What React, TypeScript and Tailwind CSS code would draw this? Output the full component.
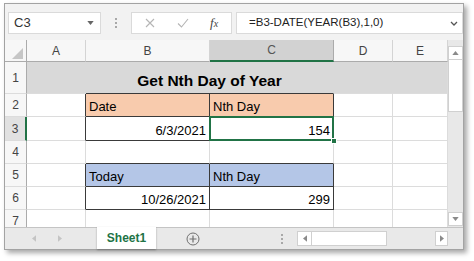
import type { ReactNode } from 'react';

// Excel window: name box, formula bar, grid A–E, sheet tabs.
const FONT = { fontFamily: '"Liberation Sans", Arial, sans-serif' };

function Hdr({ children, className = '' }: { children?: ReactNode; className?: string }) {
  return (
    <div className={`flex items-center justify-center border-r border-b text-[12px] text-[#444] ${className}`}>
      {children}
    </div>
  );
}

function Cell({ children, className = '' }: { children?: ReactNode; className?: string }) {
  return <div className={`flex items-end border-r border-b px-[3px] pb-[2px] text-[13px] leading-[15px] text-black ${className}`}>{children}</div>;
}

function Arrow({ dir, className = '' }: { dir: 'up' | 'down' | 'left' | 'right'; className?: string }) {
  const pts = { up: '0,5 4,0 8,5', down: '0,0 8,0 4,5', left: '5,0 5,8 0,4', right: '0,0 0,8 5,4' }[dir];
  const vb = dir === 'up' || dir === 'down' ? '0 0 8 5' : '0 0 5 8';
  const size = dir === 'up' || dir === 'down' ? 'h-[4px] w-[7px]' : 'h-[7px] w-[4px]';
  return (
    <svg viewBox={vb} className={`${size} ${className}`}>
      <polygon points={pts} fill="currentColor" />
    </svg>
  );
}

function Dots() {
  return (
    <div className="flex flex-col gap-[2px]">
      <span className="h-[2px] w-[2px] bg-[#a8a8a8]" />
      <span className="h-[2px] w-[2px] bg-[#a8a8a8]" />
      <span className="h-[2px] w-[2px] bg-[#a8a8a8]" />
    </div>
  );
}

export default function App() {
  const hdrRow = 'bg-[#f7f7f7] border-r-[#ababab] border-b-[#dcdcdc]';
  const hdrCol = 'bg-[#f7f7f7] border-r-[#d4d4d4] border-b-[#ababab]';
  return (
    <div className="h-[261px] w-[474px] overflow-hidden bg-white pl-[4px] pt-[3px]" style={FONT}>
      <div className="flex h-[247px] w-[460px] flex-col border border-[#a3a3a3] bg-[#f2f2f2] shadow-[3px_3px_5px_rgba(0,0,0,0.35)]">
        {/* formula bar */}
        <div className="flex h-[36px] items-start pl-[3px] pt-[8px]">
          <div className="flex h-[22px] w-[93px] items-center justify-between border border-[#dadada] bg-white pl-[5px] pr-[6px] text-[13px] text-[#333]">
            <span>C3</span>
            <Arrow dir="down" className="text-[#666]" />
          </div>
          <div className="flex h-[22px] w-[30px] items-center justify-center">
            <Dots />
          </div>
          <div className="flex h-[22px] w-[101px] items-center border border-[#dadada] bg-white text-[#b5b5b5]">
            <svg viewBox="0 0 10 10" className="ml-[13px] h-[10px] w-[10px]">
              <path d="M1 1 9 9M9 1 1 9" stroke="currentColor" strokeWidth="1.1" fill="none" />
            </svg>
            <svg viewBox="0 0 12 10" className="ml-[22px] h-[10px] w-[12px]">
              <path d="M1 5.5 4.5 9 11 1" stroke="currentColor" strokeWidth="1.1" fill="none" />
            </svg>
            <span className="ml-[21px] text-[13px] italic text-[#444]" style={{ fontFamily: '"Liberation Serif", serif' }}>
              f<span className="text-[10px]">x</span>
            </span>
          </div>
          <div className="ml-[4px] flex h-[22px] flex-1 items-center justify-between border border-[#dadada] bg-white pl-[12px] pr-[4px] text-[11.5px] text-[#222]">
            <span>=B3-DATE(YEAR(B3),1,0)</span>
            <svg viewBox="0 0 8 5" className="h-[5px] w-[8px] text-[#555]">
              <path d="M1 1 4 4 7 1" stroke="currentColor" strokeWidth="1.3" fill="none" />
            </svg>
          </div>
        </div>

        {/* grid + vertical scrollbar */}
        <div className="flex h-[187px] overflow-hidden">
          <div className="grid grid-cols-[22px_59px_124px_124px_59px_55px] grid-rows-[22px_32px_23px_24px_23px_23px_23px_17px] bg-white">
            {/* column headers */}
            <div className="flex items-end justify-end border-r border-b border-r-[#ababab] border-b-[#ababab] bg-[#f7f7f7] pb-[2px] pr-[3px]">
              <svg viewBox="0 0 10 10" className="h-[11px] w-[11px]">
                <polygon points="10,0 10,10 0,10" fill="#c6c6c6" />
              </svg>
            </div>
            <Hdr className={hdrCol}>A</Hdr>
            <Hdr className={hdrCol}>B</Hdr>
            <Hdr className="border-b-2 border-r-[#ababab] border-b-[#217346] bg-[#d2d2d2] text-[#555]">C</Hdr>
            <Hdr className={hdrCol}>D</Hdr>
            <Hdr className={hdrCol}>E</Hdr>

            {/* row 1 */}
            <Hdr className={hdrRow}>1</Hdr>
            <Cell className="border-r-[#d9d9d9] border-b-[#dcdcdc] bg-[#d9d9d9]" />
            <Cell className="col-span-2 justify-center border-r-[#d9d9d9] border-b-[#3a3a3a] bg-[#d9d9d9] pb-[3px] text-[15.5px] font-bold leading-[18px]">
              Get Nth Day of Year
            </Cell>
            <Cell className="border-r-[#d9d9d9] border-b-[#dcdcdc] bg-[#d9d9d9]" />
            <Cell className="border-r-[#dcdcdc] border-b-[#dcdcdc] bg-[#d9d9d9]" />

            {/* row 2 */}
            <Hdr className={hdrRow}>2</Hdr>
            <Cell className="border-r-[#3a3a3a] border-b-[#dcdcdc]" />
            <Cell className="border-r-[#3a3a3a] border-b-[#3a3a3a] bg-[#f8cbad]">Date</Cell>
            <Cell className="border-r-[#3a3a3a] border-b-[#3a3a3a] bg-[#f8cbad]">Nth Day</Cell>
            <Cell className="border-r-[#dcdcdc] border-b-[#dcdcdc]" />
            <Cell className="border-r-[#dcdcdc] border-b-[#dcdcdc]" />

            {/* row 3 */}
            <Hdr className="border-r-2 border-r-[#217346] border-b-[#dcdcdc] bg-[#e1e1e1] text-[#5b8f6e]">3</Hdr>
            <Cell className="border-r-[#3a3a3a] border-b-[#dcdcdc]" />
            <Cell className="justify-end border-r-[#3a3a3a] border-b-[#3a3a3a]">6/3/2021</Cell>
            <Cell className="relative justify-end border-r-[#3a3a3a] border-b-[#3a3a3a]">
              154
              <span className="pointer-events-none absolute -inset-[1px] border-2 border-[#217346]" />
              <span className="absolute -bottom-[4px] -right-[4px] h-[6px] w-[6px] border border-white bg-[#217346]" />
            </Cell>
            <Cell className="border-r-[#dcdcdc] border-b-[#dcdcdc]" />
            <Cell className="border-r-[#dcdcdc] border-b-[#dcdcdc]" />

            {/* row 4 */}
            <Hdr className={hdrRow}>4</Hdr>
            <Cell className="border-r-[#dcdcdc] border-b-[#dcdcdc]" />
            <Cell className="border-r-[#dcdcdc] border-b-[#3a3a3a]" />
            <Cell className="border-r-[#dcdcdc] border-b-[#3a3a3a]" />
            <Cell className="border-r-[#dcdcdc] border-b-[#dcdcdc]" />
            <Cell className="border-r-[#dcdcdc] border-b-[#dcdcdc]" />

            {/* row 5 */}
            <Hdr className={hdrRow}>5</Hdr>
            <Cell className="border-r-[#3a3a3a] border-b-[#dcdcdc]" />
            <Cell className="border-r-[#3a3a3a] border-b-[#3a3a3a] bg-[#b4c6e7]">Today</Cell>
            <Cell className="border-r-[#3a3a3a] border-b-[#3a3a3a] bg-[#b4c6e7]">Nth Day</Cell>
            <Cell className="border-r-[#dcdcdc] border-b-[#dcdcdc]" />
            <Cell className="border-r-[#dcdcdc] border-b-[#dcdcdc]" />

            {/* row 6 */}
            <Hdr className={hdrRow}>6</Hdr>
            <Cell className="border-r-[#3a3a3a] border-b-[#dcdcdc]" />
            <Cell className="justify-end border-r-[#3a3a3a] border-b-[#3a3a3a]">10/26/2021</Cell>
            <Cell className="justify-end border-r-[#3a3a3a] border-b-[#3a3a3a]">299</Cell>
            <Cell className="border-r-[#dcdcdc] border-b-[#dcdcdc]" />
            <Cell className="border-r-[#dcdcdc] border-b-[#dcdcdc]" />

            {/* row 7 (cut off) */}
            <div className="flex items-start justify-center border-r border-r-[#ababab] bg-[#f7f7f7] pt-[2px] text-[12px] text-[#444]">7</div>
            <div className="border-r border-r-[#dcdcdc]" />
            <div className="border-r border-r-[#dcdcdc]" />
            <div className="border-r border-r-[#dcdcdc]" />
            <div className="border-r border-r-[#dcdcdc]" />
            <div className="border-r border-r-[#dcdcdc]" />
          </div>

          <div className="flex w-[15px] flex-col bg-[#e8e8e8] pt-[6px]">
            <div className="flex h-[14px] items-center justify-center border border-[#d0d0d0] bg-white text-[#8a8a8a]">
              <Arrow dir="up" />
            </div>
            <div className="h-[52px] border-x border-b border-[#d0d0d0] bg-white" />
            <div className="flex-1" />
            <div className="mb-[1px] flex h-[14px] items-center justify-center border border-[#d0d0d0] bg-white text-[#8a8a8a]">
              <Arrow dir="down" />
            </div>
          </div>
        </div>

        {/* sheet tabs + horizontal scrollbar */}
        <div className="flex h-[22px] items-stretch border-t border-[#c4c4c4] bg-[#e9e9e9]">
          <div className="flex w-[92px] items-center gap-[22px] pl-[27px] text-[#c4c4c4]">
            <Arrow dir="left" />
            <Arrow dir="right" />
          </div>
          <div className="-mt-px flex w-[59px] items-center justify-center bg-white text-[12px] font-bold text-[#217346] shadow-[0_1px_2px_rgba(0,0,0,0.3)]">
            Sheet1
          </div>
          <div className="flex w-[74px] items-center justify-center">
            <svg viewBox="0 0 14 14" className="h-[14px] w-[14px] text-[#707070]">
              <circle cx="7" cy="7" r="6" stroke="currentColor" strokeWidth="1" fill="none" />
              <path d="M7 3.5v7M3.5 7h7" stroke="currentColor" strokeWidth="1.2" />
            </svg>
          </div>
          <div className="flex flex-1 items-center justify-end pr-[14px]">
            <Dots />
          </div>
          <div className="flex w-[151px] items-center py-[3px]">
            <div className="flex h-full w-[15px] items-center justify-center border border-[#d0d0d0] bg-white text-[#8a8a8a]">
              <Arrow dir="left" />
            </div>
            <div className="h-full w-[75px] border-y border-r border-[#d0d0d0] bg-white" />
            <div className="flex-1" />
            <div className="flex h-full w-[13px] items-center justify-center border border-[#d0d0d0] bg-white text-[#8a8a8a]">
              <Arrow dir="right" />
            </div>
          </div>
          <div className="w-[15px]" />
        </div>
      </div>
    </div>
  );
}
